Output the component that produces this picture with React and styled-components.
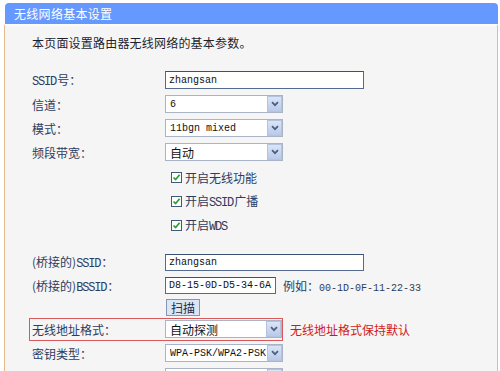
import React from "react";
import styled, { createGlobalStyle } from "styled-components";

const Global = createGlobalStyle`
  html, body { margin: 0; padding: 0; background: #ffffff; }
  body { font-family: "Noto Sans CJK SC", "Noto Sans", sans-serif; font-size: 12px; overflow: hidden; }
`;

const Frame = styled.div`
  width: 494px;
  height: 371px;
  padding: 3px 2px 0 4px;
  display: flex;
  flex-direction: column;
  box-sizing: content-box;
`;

const Header = styled.div`
  height: 21px;
  margin-left: 1px;
  background: #6699ff;
  border-radius: 4px 4px 0 0;
  color: #ffffff;
  font-size: 12px;
  line-height: 21px;
  padding-left: 9px;
  letter-spacing: 0.3px;
`;

const Body = styled.div`
  flex: 1;
  background: #f5f5f5;
  border-left: 1px solid #e6b98f;
  border-right: 1px solid #e6b98f;
  border-top: 2px solid #fbfbfb;
  padding: 9px 0 0 27px;
  display: flex;
  flex-direction: column;
  overflow: hidden;
`;

const Intro = styled.div`
  height: 16px;
  line-height: 16px;
  color: #1f1f2f;
  margin-bottom: 17px;
  letter-spacing: 0.2px;
`;

const Row = styled.div`
  display: flex;
  align-items: center;
  height: ${(p) => p.h || 24}px;
  flex-shrink: 0;
`;

const Label = styled.div`
  width: 133px;
  color: #2d3c60;
  flex-shrink: 0;
  white-space: nowrap;
`;

const Mono = styled.span`
  font-family: "Liberation Mono", monospace;
  font-size: 12px;
  letter-spacing: -1.2px;
  margin-right: 1.2px;
`;

const TextInput = styled.div`
  box-sizing: border-box;
  width: ${(p) => p.w}px;
  height: ${(p) => p.ht || 18}px;
  border: 1px solid #556a90;
  border-top-color: #3c4f74;
  background: #fffffd;
  padding-left: 3px;
  display: flex;
  align-items: center;
  font-family: "Liberation Mono", monospace;
  font-size: 10px;
  color: #111;
  white-space: nowrap;
  overflow: hidden;
`;

const SelectBox = styled.div`
  box-sizing: border-box;
  width: ${(p) => p.w || 118}px;
  height: 18px;
  border: 1px solid #a9b4c6;
  background: #ffffff;
  display: flex;
  align-items: center;
  justify-content: space-between;
  padding: 0 0 0 4px;
`;

const SelectValue = styled.span`
  color: #111;
  font-family: ${(p) => (p.mono ? '"Liberation Mono", monospace' : '"Noto Sans CJK SC", sans-serif')};
  font-size: ${(p) => (p.mono ? 10 : 12)}px;
  white-space: nowrap;
  overflow: hidden;
`;

const ArrowBtn = styled.div`
  width: 15px;
  height: 16px;
  box-sizing: border-box;
  border: 1px solid #b3c3e0;
  background: linear-gradient(#dbe5f7, #b9c9e9);
  display: flex;
  align-items: center;
  justify-content: center;
  flex-shrink: 0;
`;

const Select = ({ value, mono, w }) => (
  <SelectBox w={w}>
    <SelectValue mono={mono}>{value}</SelectValue>
    <ArrowBtn>
      <svg width="8" height="6" viewBox="0 0 8 6">
        <path d="M1 1.2 L4 4.2 L7 1.2" fill="none" stroke="#4a5d82" strokeWidth="1.7" />
      </svg>
    </ArrowBtn>
  </SelectBox>
);

const CheckRow = styled(Row)`
  padding-left: 139px;
`;

const CheckBox = styled.div`
  width: 11px;
  height: 11px;
  box-sizing: border-box;
  border: 1px solid #3f5a78;
  background: #ffffff;
  display: flex;
  align-items: center;
  justify-content: center;
  margin-right: 3px;
`;

const CheckText = styled.span`
  color: #2d3c60;
`;

const Check = ({ children }) => (
  <CheckRow h={24}>
    <CheckBox>
      <svg width="9" height="9" viewBox="0 0 9 9">
        <path d="M1.5 4.5 L3.6 6.6 L7.6 1.8" fill="none" stroke="#22a030" strokeWidth="1.7" />
      </svg>
    </CheckBox>
    <CheckText>{children}</CheckText>
  </CheckRow>
);

const Spacer = styled.div`
  height: ${(p) => p.h}px;
  flex-shrink: 0;
`;

const Hint = styled.span`
  color: #2d3c60;
  margin-left: 7px;
  white-space: nowrap;
`;

const HintMono = styled.span`
  font-family: "Liberation Mono", monospace;
  font-size: 10px;
`;

const ScanButton = styled.div`
  margin-left: 134px;
  box-sizing: border-box;
  height: 17px;
  padding: 0 4px;
  border: 1px solid #8595b3;
  background: #dde5f3;
  color: #1d2a48;
  display: flex;
  align-items: center;
  font-size: 12px;
`;

const Highlight = styled.div`
  display: flex;
  align-items: center;
  box-sizing: border-box;
  height: 23px;
  margin-left: -3px;
  padding-left: 2px;
  border: 1px solid #d9595b;
`;

const Note = styled.span`
  color: #d11a1a;
  margin-left: 7px;
  white-space: nowrap;
`;

export default function App() {
  return (
    <>
      <Global />
      <Frame>
        <Header>无线网络基本设置</Header>
        <Body>
          <Intro>本页面设置路由器无线网络的基本参数。</Intro>
          <Row>
            <Label><Mono>SSID</Mono>号：</Label>
            <TextInput w={199}>zhangsan</TextInput>
          </Row>
          <Row>
            <Label>信道：</Label>
            <Select value="6" mono />
          </Row>
          <Row>
            <Label>模式：</Label>
            <Select value="11bgn mixed" mono />
          </Row>
          <Row>
            <Label>频段带宽：</Label>
            <Select value="自动" />
          </Row>
          <Spacer h={1} />
          <Check>开启无线功能</Check>
          <Check>开启<Mono>SSID</Mono>广播</Check>
          <Check>开启<Mono>WDS</Mono></Check>
          <Spacer h={13} />
          <Row>
            <Label>(桥接的)<Mono>SSID</Mono>：</Label>
            <TextInput w={199} ht={17}>zhangsan</TextInput>
          </Row>
          <Row h={23}>
            <Label>(桥接的)<Mono>BSSID</Mono>：</Label>
            <TextInput w={111} ht={17}>D8-15-0D-D5-34-6A</TextInput>
            <Hint>例如：<HintMono>00-1D-0F-11-22-33</HintMono></Hint>
          </Row>
          <Row h={20}>
            <ScanButton>扫描</ScanButton>
          </Row>
          <Row h={24}>
            <Highlight>
              <Label>无线地址格式：</Label>
              <Select value="自动探测" w={117} />
            </Highlight>
            <Note>无线地址格式保持默认</Note>
          </Row>
          <Row>
            <Label>密钥类型：</Label>
            <Select value="WPA-PSK/WPA2-PSK" mono />
          </Row>
          <Row>
            <Label />
            <Select value="" mono />
          </Row>
        </Body>
      </Frame>
    </>
  );
}
